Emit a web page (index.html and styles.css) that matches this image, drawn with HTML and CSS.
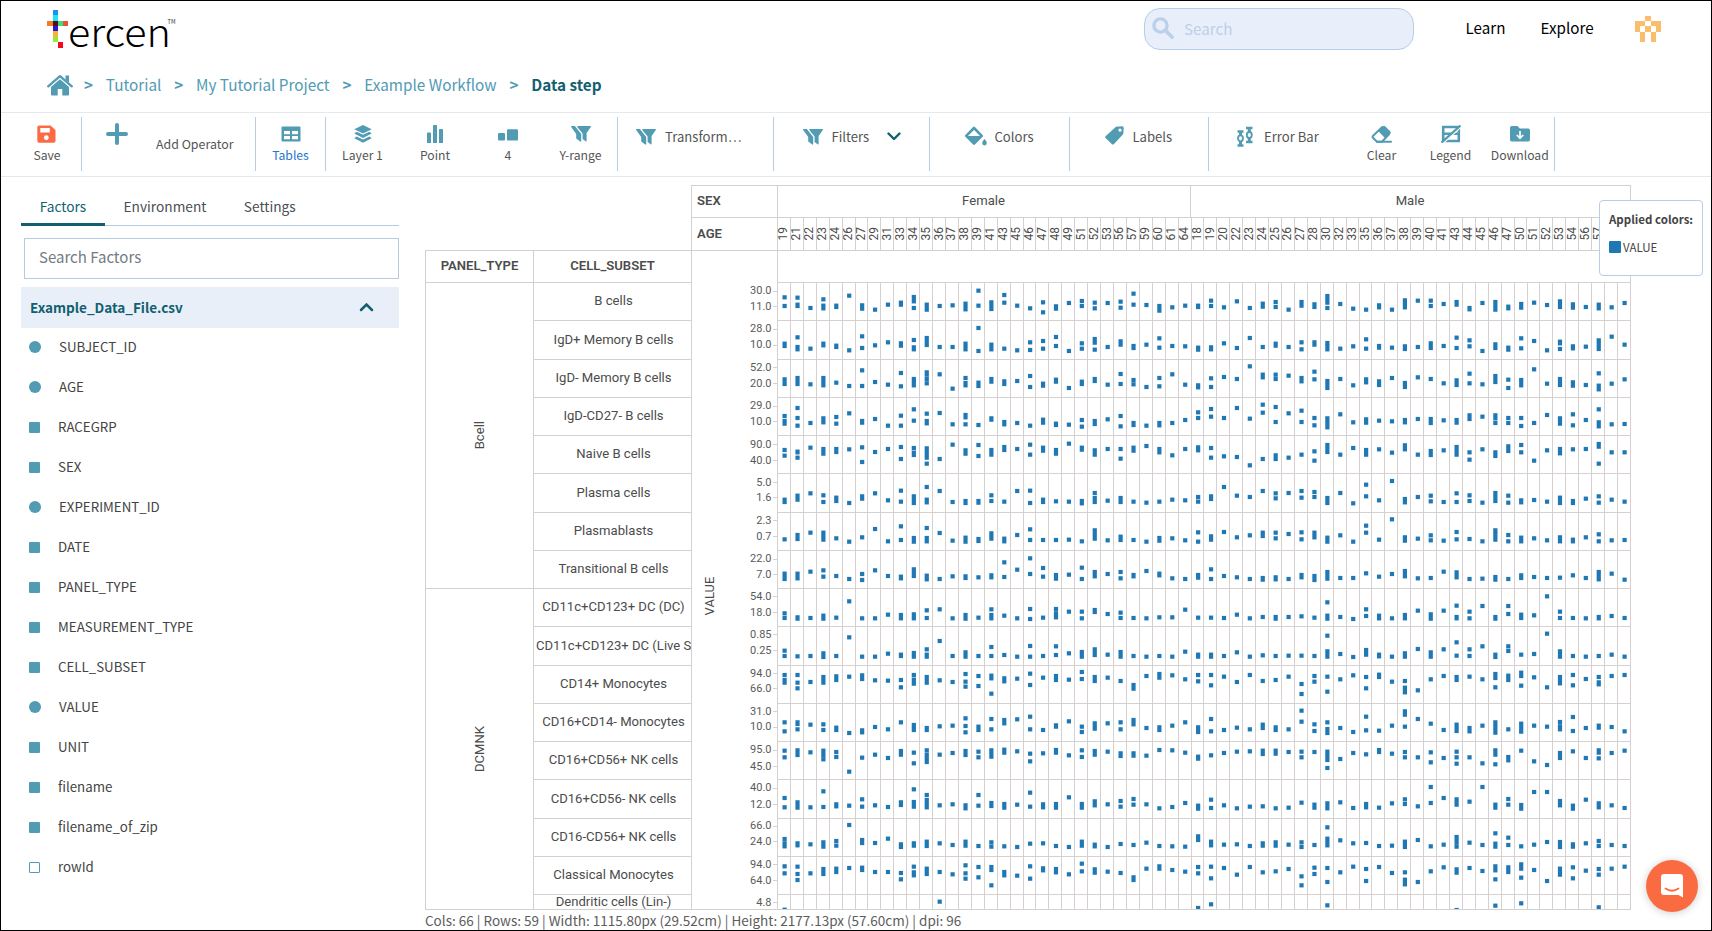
FILE: index.html
```html
<!DOCTYPE html>
<html lang="en">
<head>
<meta charset="utf-8">
<title>Tercen - Data step</title>
<link rel="stylesheet" href="styles.css">
</head>
<body>
<div class="app">
  <header class="topbar">
    <svg class="logo" width="132" height="44" viewBox="0 0 132 44">
      <g shape-rendering="crispEdges">
        <rect x="6" y="1" width="5" height="5.5" fill="#1296ef"/><rect x="6" y="6" width="5" height="6" fill="#1de4f6"/>
        <rect x="0" y="12" width="6" height="5" fill="#f37b2c"/><rect x="6" y="12" width="5" height="5" fill="#54101a"/><rect x="11" y="12" width="5" height="5" fill="#3ddc84"/><rect x="16" y="12" width="5" height="5" fill="#f0522f"/>
        <rect x="6" y="17" width="5" height="5.5" fill="#2a17d6"/><rect x="6" y="22" width="5" height="6" fill="#f9b233"/><rect x="6" y="28" width="5" height="5" fill="#86f03a"/><rect x="11" y="33" width="5" height="6" fill="#f4071f"/>
      </g>
      <text class="logo-word" x="21" y="37.500" textLength="103" lengthAdjust="spacingAndGlyphs">ercen</text>
      <text class="logo-tm" x="120.500" y="14.500" textLength="8" lengthAdjust="spacingAndGlyphs">TM</text>
    </svg>
    <div class="search">
      <svg width="22" height="22" viewBox="0 0 22 22"><circle cx="8.500" cy="8.500" r="6.600" fill="none" stroke="#bcd0e9" stroke-width="3.400"/><path d="M13.500 13.500L20 20" stroke="#bcd0e9" stroke-width="3.800" stroke-linecap="round"/></svg>
      <span>Search</span>
    </div>
    <a class="nav nav-learn">Learn</a>
    <a class="nav nav-explore">Explore</a>
    <svg class="avatar" width="26" height="26" viewBox="0 0 5 5" shape-rendering="crispEdges" fill="#fbbd6c"><path d="M2 0h1v1h-1zM0 1h2v1h-2zM3 1h2v1h-2zM0 2h1v1h-1zM2 2h1v1h-1zM4 2h1v1h-1zM1 3h1v2h-1zM3 3h1v2h-1z"/></svg>
  </header>

  <nav class="crumbs">
    <svg class="home" width="26" height="22" viewBox="0 0 26 22" fill="#519bb3"><path d="M13 5.200L4 12.900V20.500a1 1 0 0 0 1 1h5.700v-6.500h4.600v6.500H21a1 1 0 0 0 1-1V12.900z"/><path d="M1.200 12.300L13 2.200l11.800 10.100" fill="none" stroke="#519bb3" stroke-width="2.300" stroke-linecap="round" stroke-linejoin="round"/><path d="M18.500 1.500h3.500v7l-3.500-3z"/></svg>
    <b class="sep s1">&gt;</b><a>Tutorial</a><b class="sep">&gt;</b><a>My Tutorial Project</a><b class="sep">&gt;</b><a>Example Workflow</a><b class="sep">&gt;</b><strong>Data step</strong>
  </nav>

  <div class="toolbar">
    <div class="tool line save"><svg width="19" height="18" viewBox="0 0 19 18"><path d="M2 .5h11.500L18.500 5v11a1.800 1.800 0 0 1-1.800 1.800H2A1.800 1.800 0 0 1 .300 16V2.300A1.800 1.800 0 0 1 2 .500z" fill="#fb6b45"/><path d="M3.300 3h9.500v4.500H3.300z" fill="#fff"/><circle cx="9.300" cy="12.700" r="2.400" fill="#fff"/></svg><span>Save</span></div>
    <div class="tool-wide line add"><svg width="22" height="22" viewBox="0 0 22 22"><path d="M11 2v18M2 11h18" stroke="#519bb3" stroke-width="4" stroke-linecap="round"/></svg><span>Add Operator</span></div>
    <div class="tool line active"><svg width="20" height="18" viewBox="0 0 20 18"><path fill="#519bb3" fill-rule="evenodd" d="M1.500 1.500h17a1 1 0 0 1 1 1v13a1 1 0 0 1-1 1h-17a1 1 0 0 1-1-1v-13a1 1 0 0 1 1-1zM3 6v3.200h6V6zM11 6v3.200h6V6zM3 11v3.200h6V11zM11 11v3.200h6V11z"/></svg><span>Tables</span></div>
    <div class="tool nudge"><svg width="18" height="18" viewBox="0 0 18 18" fill="#519bb3"><path d="M9 0l8.700 4.200L9 8.400.300 4.200z"/><path d="M2.600 6.700L9 9.800l6.400-3.100 2.300 1.900L9 12.900.300 8.600z"/><path d="M2.600 11.400L9 14.500l6.400-3.100 2.300 1.900L9 17.700.300 13.300z"/></svg><span>Layer 1</span></div>
    <div class="tool nudge"><svg width="16" height="18" viewBox="0 0 16 18" fill="#519bb3"><rect x="0" y="7.500" width="4" height="10.500" rx=".6"/><rect x="6" y="0" width="4" height="18" rx=".6"/><rect x="12" y="4" width="4" height="14" rx=".6"/></svg><span>Point</span></div>
    <div class="tool nudge"><svg width="20" height="18" viewBox="0 0 20 18" fill="#519bb3"><rect x="0" y="8" width="7" height="7.500" rx="1"/><rect x="9" y="4.300" width="11" height="11.300" rx="1.200"/></svg><span>4</span></div>
    <div class="tool line"><svg width="20" height="18" viewBox="0 0 20 18"><use href="#funnels"/></svg><span>Y-range</span></div>
    <div class="tool-wide line transform"><svg width="20" height="18" viewBox="0 0 20 18"><use href="#funnels"/></svg><span>Transform…</span></div>
    <div class="tool-wide line filters"><svg width="20" height="18" viewBox="0 0 20 18"><use href="#funnels"/></svg><span>Filters</span><svg class="chev" width="14" height="9" viewBox="0 0 14 9"><path d="M1.500 1.500L7 7l5.500-5.500" fill="none" stroke="#125f70" stroke-width="2.400" stroke-linecap="round" stroke-linejoin="round"/></svg></div>
    <div class="tool-wide line colors"><svg width="22" height="20" viewBox="0 0 22 20"><path d="M9 2L16.700 9.800 9 17.600 1.300 9.800z" fill="none" stroke="#519bb3" stroke-width="2.600" stroke-linejoin="round"/><path d="M1.500 10h15.300l-7.800 8z" fill="#519bb3"/><path d="M19.500 13c1.600 2 2.300 2.900 2.300 4.100a2.300 2.300 0 0 1-4.600 0c0-1.200.7-2.100 2.300-4.100z" fill="#519bb3"/></svg><span>Colors</span></div>
    <div class="tool-wide line labels"><svg width="19" height="19" viewBox="0 0 19 19"><path fill="#519bb3" fill-rule="evenodd" d="M11 .700L17.200.300a1.500 1.500 0 0 1 1.500 1.500L18.300 8 9 18a1.500 1.500 0 0 1-2.200 0L.800 12.300a1.500 1.500 0 0 1 0-2.200zM15 2.600a1.600 1.600 0 1 0 .01 0z"/></svg><span>Labels</span></div>
    <div class="tool-wide errbar"><svg width="16" height="22" viewBox="0 0 16 22" fill="none" stroke="#519bb3"><path stroke-width="2.600" d="M.5 5.500h6M.5 19.500h6M9 2h6.500M9 16h6.500"/><path stroke-width="3" d="M3.500 5.500v4M3.500 15v4.500M12.300 2v4M12.300 12v4"/><ellipse cx="3.500" cy="12.300" rx="2.500" ry="3" stroke-width="1.800"/><ellipse cx="12.300" cy="9" rx="2.500" ry="3" stroke-width="1.800"/></svg><span>Error Bar</span></div>
    <div class="tool"><svg width="21" height="18" viewBox="0 0 21 18"><path d="M7.200 6L12 1.200a1.500 1.500 0 0 1 2.100 0l5.300 5.300a1.500 1.500 0 0 1 0 2.100l-5 5z" fill="#519bb3"/><path d="M11.800 1.500L1.900 11a1.200 1.200 0 0 0 0 1.700L6 16.800h5l7.500-8" fill="none" stroke="#519bb3" stroke-width="2"/><path d="M6 16.800h14" stroke="#519bb3" stroke-width="2" stroke-linecap="round"/></svg><span>Clear</span></div>
    <div class="tool"><svg width="20" height="18" viewBox="0 0 20 18"><path d="M2.200 2h15.600v14H2.200zM2 8.800h16" fill="none" stroke="#519bb3" stroke-width="2.600"/><path d="M1.800 18.500L20 2" stroke="#fff" stroke-width="1.500"/><path d="M.500 17.600L19.500.500" stroke="#519bb3" stroke-width="2.200"/></svg><span>Legend</span></div>
    <div class="tool line"><svg width="20" height="18" viewBox="0 0 20 18"><path d="M1.800 1h5.700l2.300 2.400h8.400A1.800 1.800 0 0 1 20 5.200v9.500a1.800 1.800 0 0 1-1.800 1.800H1.800A1.800 1.800 0 0 1 0 14.700V2.800A1.800 1.800 0 0 1 1.800 1z" fill="#519bb3"/><path d="M10 6v7M6.800 10L10 13.200 13.200 10" fill="none" stroke="#fff" stroke-width="1.700"/></svg><span>Download</span></div>
  </div>

  <main class="workspace">
    <aside class="sidebar">
      <div class="tabs"><span class="tab on">Factors</span><span class="tab">Environment</span><span class="tab">Settings</span></div>
      <div class="factor-search">Search Factors</div>
      <div class="file"><span>Example_Data_File.csv</span><svg width="15" height="10" viewBox="0 0 15 10"><path d="M2 8l5.500-5.500L13 8" fill="none" stroke="#125f70" stroke-width="2.500" stroke-linecap="round"/></svg></div>
      <ul class="factors">
        <li class="num">SUBJECT_ID</li><li class="num">AGE</li><li>RACEGRP</li><li>SEX</li><li class="num">EXPERIMENT_ID</li><li>DATE</li><li>PANEL_TYPE</li><li>MEASUREMENT_TYPE</li><li>CELL_SUBSET</li><li class="num">VALUE</li><li>UNIT</li><li>filename</li><li>filename_of_zip</li><li class="empty">rowId</li>
      </ul>
    </aside>

    <section class="chart">
      <div class="crosstab">
        <div class="cell name sex">SEX</div><div class="cell top">Female</div><div class="cell top end">Male</div>
        <div class="cell name age">AGE</div><div class="ages" id="ages"></div>
        <div class="cell head">PANEL_TYPE</div><div class="cell head">CELL_SUBSET</div><div class="cell"></div><div class="cell end wide"></div>
        <div class="body">
          <div class="panels"><div class="cell panel bcell"><span>Bcell</span></div><div class="cell panel dcm"><span>DCMNK</span></div></div>
          <div class="subsets" id="subsets"></div>
          <svg class="plot" id="plot" width="940" height="628" viewBox="0 0 940 628"></svg>
        </div>
      </div>
      <div class="status">Cols: 66 | Rows: 59 | Width: 1115.80px (29.52cm) | Height: 2177.13px (57.60cm) | dpi: 96</div>
    </section>
  </main>

  <div class="legend"><b>Applied colors:</b><div><i></i>VALUE</div></div>
  <button class="chat" aria-label="Chat"><svg width="24" height="26" viewBox="0 0 24 26"><path d="M4 1h16a3 3 0 0 1 3 3v20.500L18.500 22H4a3 3 0 0 1-3-3V4a3 3 0 0 1 3-3z" fill="#fff"/><path d="M5.500 15.500q6.500 4.500 13 0" fill="none" stroke="#fb6b42" stroke-width="1.800" stroke-linecap="round"/></svg></button>
</div>
<svg width="0" height="0" class="defs"><defs><g id="funnels" fill="#519bb3"><path d="M6.800 1H19.300a.6.6 0 0 1 .5 1L15.600 8V15.800a.6.6 0 0 1-1 .5L11.600 14V8.500L6.300 1.900a.6.6 0 0 1 .5-.9z"/><path d="M.700 1H3.900L5.200 2.700 10.200 9v7a.6.6 0 0 1-1 .5L5.200 13.500V9L.200 2A.6.600 0 0 1 .700 1z"/></g></defs></svg>
<script src="chart.js"></script>
</body>
</html>
```
FILE: styles.css
```css
* { box-sizing: border-box; }
body { margin: 0; background: #fff; font-family: "Noto Sans CJK SC", "Noto Sans", sans-serif; color: #4a4f54; }
.app { width: 1712px; height: 931px; border: 1px solid #000; position: relative; overflow: hidden; display: flex; flex-direction: column; }
.defs { position: absolute; }

.topbar { height: 56px; display: flex; align-items: flex-start; padding: 7px 50px 0 46px; flex: none; }
.logo { margin-top: 1px; overflow: visible; }
.logo-word { font-size: 39px; font-weight: 300; fill: #000; }
.logo-tm { font-size: 6px; fill: #333; }
.search { margin-left: 965px; width: 270px; height: 42px; border: 1px solid #b7cee8; border-radius: 16px; background: #e8effa; display: flex; align-items: center; padding: 0 0 2px 7px; gap: 10px; font-size: 15.200px; line-height: 20px; color: #bccfe9; }
.nav { font-size: 15.200px; line-height: 20px; color: #000; margin-top: 9px; }
.nav-learn { margin-left: 51.500px; width: 75px; }
.nav-explore { width: 94.500px; }
.avatar { margin-top: 8px; }

.crumbs { height: 55px; flex: none; padding: 0 46px; display: flex; align-items: center; font-size: 15.300px; line-height: 20px; color: #519bb3; }
.crumbs > :not(.home) { margin-bottom: 1px; }
.home { margin-right: 11px; }
.sep { margin-left: 12.800px; margin-right: 12.800px; }
.sep.s1 { margin-left: 0; }
.crumbs strong { color: #125f70; }

.toolbar { height: 65px; flex: none; border-top: 1px solid #e5e8ec; border-bottom: 1px solid #e5e8ec; padding: 0 0 1px 12px; display: grid; grid-template-columns: 69px 174px 70px 72px 73px 73px 74px 155.500px 156px 140px 139.500px 138.500px 69px 69px 69.500px; align-items: center; font-size: 12.200px; line-height: 16px; color: #555; }
.tool, .tool-wide { height: 54px; border-right: 1px solid transparent; }
.line { border-right-color: #b9cce0; }
.tool { display: flex; flex-direction: column; align-items: center; padding-top: 8px; gap: 4px; }
.tool.nudge { padding-left: 2px; }
.tool.save > svg { margin-left: -2px; }
.active span { color: #2577cf; }
.tool-wide { display: flex; gap: 9px; font-size: 13.100px; }
.tool-wide > svg { margin-top: 9px; }
.tool-wide > span { margin-top: 12px; white-space: nowrap; }
.add { padding-left: 24px; gap: 28px; font-size: 12.400px; }
.add > svg { margin-top: 6px; }
.add > span { margin-top: 19px; }
.transform { padding-left: 18px; }
.transform > svg, .filters > svg { margin-top: 11px; }
.filters { padding-left: 29px; }
.filters .chev { margin: 15px 0 0 9px; }
.colors { padding-left: 35px; gap: 8px; }
.labels { padding-left: 35px; }
.errbar { padding-left: 28px; gap: 11px; }

.workspace { display: flex; flex: 1; min-height: 0; }
.sidebar { width: 398px; padding: 9px 0 0 20px; flex: none; }
.tabs { display: flex; height: 40px; border-bottom: 1px solid #b5cbe2; font-size: 13.700px; line-height: 20px; }
.tab { padding: 10px 18.700px 0; height: 40px; }
.tab.on { color: #125f70; border-bottom: 3px solid #125f70; }
.factor-search { margin: 12px 0 0 3px; height: 41px; border: 1px solid #b5cbe2; padding: 8px 14px; font-size: 15px; line-height: 20px; color: #737b84; }
.file { margin-top: 8px; height: 41px; background: #e8eff9; display: flex; justify-content: space-between; align-items: center; padding: 0 25px 2px 9px; font-size: 13.500px; font-weight: 700; line-height: 20px; color: #125f70; }
.factors { list-style: none; margin: -1px 0 0; padding: 0 0 0 8px; }
.factors li { height: 40px; display: flex; align-items: center; gap: 18px; font-size: 13.300px; line-height: 18px; color: #444; }
.factors li::before { content: ""; box-sizing: border-box; width: 11px; height: 11px; background: #519bb3; border-radius: 1px; }
.factors li.num::before { width: 12px; height: 12px; border-radius: 50%; }
.factors li.empty::before { background: #fff; border: 1px solid #519bb3; }

.chart { margin-left: 26px; padding-top: 8px; font-family: Roboto, "Liberation Sans", sans-serif; font-size: 13.100px; line-height: 16px; color: #4c4c4c; }
.crosstab { display: grid; grid-template-columns: 108px 158px 86px 413px 441px; grid-template-rows: 32px 33px 32px 628px; }
.cell { border: solid #d3d0d0; border-width: 1px 0 0 1px; display: flex; align-items: center; justify-content: center; padding-bottom: 2px; }
.end { border-right-width: 1px; }
.name { grid-column: 3; justify-content: flex-start; padding-left: 5px; font-weight: 600; }
.cell.age { padding-bottom: 1px; }
.top { padding-right: 1px; }
.head { font-weight: 600; }
.wide, .ages { grid-column: 4 / 6; }
.ages { display: flex; border-top: 1px solid #d3d0d0; border-right: 1px solid #d3d0d0; }
.ages span { flex: 1 1 0; min-width: 0; border-left: 1px solid #d3d0d0; writing-mode: vertical-rl; display: flex; align-items: center; justify-content: center; font-size: 12px; line-height: 11px; }
.ages em { font-style: normal; transform: rotate(180deg); }
.body { grid-column: 1 / 6; display: flex; overflow: hidden; border-bottom: 1px solid #d3d0d0; }
.panels { width: 108px; flex: none; }
.panel { padding-bottom: 0; }
.panel span { writing-mode: vertical-rl; transform: rotate(180deg); }
.bcell { height: 306px; }
.dcm { height: 322px; }
.subsets { width: 158px; flex: none; }
.subset { height: 38.250px; overflow: hidden; white-space: nowrap; padding: 0 0 .5px 2px; }
.subset.long { justify-content: flex-start; padding-left: 2px; }
.subset.last { height: 16px; padding-bottom: 2px; }
.plot { flex: none; }
.plot .tick { font-size: 11px; fill: #5a5a5a; text-anchor: end; }
.plot .title { font-size: 13px; fill: #4c4c4c; text-anchor: middle; }
.plot .grid { stroke: #d6d0d0; stroke-width: 1; fill: none; }
.plot .marks { fill: #1f77b4; }
.status { font-family: "Noto Sans CJK SC", sans-serif; font-size: 13.530px; line-height: 18px; padding-top: 1px; color: #5c5c5c; white-space: nowrap; }

.legend { position: absolute; left: 1598px; top: 199px; width: 104px; height: 76px; background: #fff; border: 1px solid #b7cee8; border-radius: 4px; padding: 10px 0 0 9px; font-size: 11.500px; line-height: 16px; color: #444; white-space: nowrap; }
.legend div { display: flex; align-items: center; gap: 2px; margin-top: 12px; }
.legend i { width: 12px; height: 12px; background: #1f77b4; border-radius: 1px; }
.chat { position: absolute; left: 1645px; top: 859px; width: 52px; height: 52px; border: 0; border-radius: 50%; background: #fb6b42; box-shadow: 0 1px 8px rgba(0,0,0,.2); display: flex; align-items: center; justify-content: center; padding: 0; }
```
FILE: chart.js
```js
const ages = "19 21 22 23 24 26 27 29 31 33 34 35 36 37 38 39 41 43 45 46 47 48 49 51 52 53 56 57 59 60 61 64 18 19 20 22 23 24 25 26 27 28 30 32 33 35 36 37 38 39 40 41 43 44 45 46 47 50 51 52 53 54 56 57 59 60".split(" ");

const subsets = ["B cells", "IgD+ Memory B cells", "IgD- Memory B cells", "IgD-CD27- B cells", "Naive B cells", "Plasma cells", "Plasmablasts", "Transitional B cells", "CD11c+CD123+ DC (DC)", "CD11c+CD123+ DC (Live Sorted)", "CD14+ Monocytes", "CD16+CD14- Monocytes", "CD16+CD56+ NK cells", "CD16+CD56- NK cells", "CD16-CD56+ NK cells", "Classical Monocytes", "Dendritic cells (Lin-)"];

// [label, y] pairs for each facet's axis
const ticks = [
  ["30.0", 291, "11.0", 306.3], ["28.0", 329, "10.0", 345], ["52.0", 367.7, "20.0", 383.3], ["29.0", 406, "10.0", 421.7],
  ["90.0", 444.3, "40.0", 460.7], ["5.0", 482.3, "1.6", 497.7], ["2.3", 520.3, "0.7", 536.3], ["22.0", 559, "7.0", 574.3],
  ["54.0", 596.7, "18.0", 612.3], ["0.85", 634.7, "0.25", 650.7], ["94.0", 673.3, "66.0", 688.7], ["31.0", 711.3, "10.0", 727],
  ["95.0", 750, "45.0", 766.3], ["40.0", 788, "12.0", 804.7], ["66.0", 826, "24.0", 841.3], ["94.0", 864.7, "64.0", 880.3], ["4.8", 902.3]
];

// One line per facet row, one entry per age column: "a,b" separate points, "a-b" a run of overlapping points (thirds of a pixel)
const upper = [
"262,288 263,284-288 294 268,287-295 287-291 257 286-296 299 284 278-284 261-274,294 284-299 288 286 281-298 242,287 277-297 255,278 287 295 277,307 289-296 279 273,288 278,295 279 275,293 251,284 285 288-302 292 287 287-291 272,288 292 274 294 281-290 276,291 299 276-287 283-291 258-278,294 282 296 299 286-292 299 271-292 272 272,288 282 276-284 294-298 279 276-299 290-295 282-293 278 285 274-291 283-293 291 284-295 292 279",
"401-408 382,411-418 416 401-406 407-411 421 379,414 406 397 400-407 390,412-418 384-405 411 411 401-418 354,423 404-418 416 421 397,420 393,416 381,408 423 400,416 387-398,419 411 394-404 408-414 404 385,413 408 409 413-419 412-418 400 414 384 411 401-407 411 397,418 397-404 399,410-418 416 409 388,416 408-413 413 409-417 411 400-414 408 383,414 391,409 423 403-414 413-419 385,415 393 421 395-400,417 409-415 410 391,402-417 380 404",
"508-522 504-522 523 504-526 518 528 481,528 516 524 489,529 507,519-526 487-494,507,520 493 536 504,519-526 518-528 507-515 514-522 513 498,531 521-527 509-515 534 515-522 507-513 524 492,522 510,523 531 504,529 493 524 526-532 505,531 501 507 469 494-502 494,507 497 504-514 485,508 513-534 507 526 508-517 514-525 504 519-531 502 507 520 511-525 491,520 523 498-516 509,534 510-526 478 521 507-525 517-527 525 490,527-538 521 508",
"618,633-641 594,624,647 639 625-637 621,641 610 633-638 627 647 617,647 598,632 611,633-640 609 643 615-622,643 645 625-629 636-643 639 647 629-638 641-645 644 630,650 633-642 628 618,649 639-645 647 639-646 639 630 607,624 597,620 624 594 626 584,608 591,636 610 602,636 624,646 625-641,652 613 637 628-638 632 634 630-637 627 627-639 631 630-638 616-627 620 616-625,639 624,639 624,648 639 615 625-641 613,646 630 598,637-649 643 642",
"720,737 725-727,743 713 717-731 717-726 718 712,756 726 717 711,747 714,728-735 715-743,761 747 704 721-731 705,738 720-734 711-720 717 704,734 713-722 720-731 701 713-719 721-734 717 717,746 713-722 708 717-727 736 717 712-721 714,743 739 741 766 747 736-747 743 734 724,752 705-726 734 714 720-734 718 728 706-718 734 723-735 721 711-734 727,749 718 727-738 709-723 705,727 752 721 717-730 718 717 702-710,761 727 727",
"869-876 857-869 850 856,876 863-873 879 859-866 850 871 842,875 859-879 831,869-877 843 876 873-879 873-878 856,873 875 843 842,879 869-876 874 875 873-880 849,864-876 872 864-876 875 878 875 869 871 861,875 859-867 831 857 861 843 850,865 849 843,863 846,861 864-879 849 880 824,859 871 813 867-877 861 857,874 876 850,876 856,873 878 849-873 857,878 871-877 870 875 863-879 873-879 866 859,878 869 875",
"988 975-987 968 968-989 985 995 982 957 994 949,990 984-995 954,984-994 969 992 983-995 987-993 970-986 986-994 975 958,990 990 990 989 994 961-986 991 980-990 990 995 984-992 985 991 967,995 979-989 966 982 976 968-978 968,985 972 967,988 968-982 983-995 976 995 947,968 989 928 982-992 986 976,991 992 966,988 987 994 961,972-989 975,994 983-994 985 991 982-994 989-994 982 973,994 991 990",
"1091-1107 1091-1105 1085 1081,1100 1098 1107 1092,1110 1081 1098 1100-1105 1078-1098 1097-1108 1107 1099 1099-1104 1102 1096-1102 1057,1101 1079 1045,1092 1074,1100 1095-1106 1094 1073,1107 1086-1099 1092 1086,1105 1095-1099 1083 1091-1096 1105 1107 1095-1103 1078,1107 1098 1102 1107 1104-1109 1102-1108 1107 1095-1102 1098-1110 1086-1106 1104 1104 1090 1100 1092 1083-1099 1105 1104 1085 1087-1102 1107 1106 1101-1109 1107 1096-1104 1101 1104 1103 1096 1104 1086,1098-1108 1091 1109"
];
const lower = [
"130,144 142-146 144 137-146 143 94 145 145 134 135-145 133-145 121,144 118 145 135-146 143 118,135-145 137 145 117,147 143 117,130-142 125 125,145 120-126 132 128,144 144 145 142 142 119 143 143 144 134 145 141 141-146 141 139 143 97,137-146 141 147 118,138 137-145 145 135-145 122 133-146 122 107,141-145 125,145 108 141-146 108,132 134-144 136 79 125,144 144 145 141-145 138 144",
"242,258 259 258 250-261 258 202 260 260 251 254-258 249-260 238,254-260 213 258 247-260 258 231,258 255 260 228,260 258 229,255 250 246-260 238-255 254 246-260 258 260 258 260 245 254-260 254-260 258 247 260 256 258 257 257 258 197,244-260 252 261 240-254 254-259 260 250-260 237 247-260 238 217,257 238,258 229 254-261 229,243 254 252 191 244-260 258 260 258 254 260",
"315,330-338 315,338,355 336 321-338 319-330 320 316-327 331 332 330,352 315,329-341 321-338 331 336 312,335,350 318,348 317-325,371 325-334 326 311,345 323 318-330 329 306,327 321-333 323 333 345-356 318 312-323 316 328 315,334 315,346 320 336 315 333 330 320 342,372 318,335 320,365 328 316 321,355 314-321 335 333,353-367 361 328 318 321-330 320 328 312-324,352 317-330 308-318,347 322 352 321-340 315,346 327 321,337-343 318 315",
"457,484 457-462,478 464 463,480 473-480 489 481-487 471 478 457 465-480 474-480 469 467 445,468,487 470-480 447,478 450-460 448 440,478 480 466-470 454 470,486 460-476 460 457,478 450-463 474 472-480 467 457 472-486 447,484 480 473 478 464-474 472-480 478 422,455 463,483 457,477-489 474 486 440,481 482 467 424-434,470 447 461 480 464-483 474-484 467 457-488 478 461-485 467 470 456,469-478 441,483 474 467-473 471 484",
"542,562 541-555 547 542-556,568 546,561 605 563 554 564 543-554 548,580 541,554-576 554 549 543-555 545,562 541-560 539-548 544 551,574 550 540-548 556 541,561 543-554 545 550-558 550-557 557 540 541 548 560-566 556 549 545 544 542-552 542-551 546 545,562 546 545-570,594 567 549 553 540-546 551 546,562 562 547,577 564 545,562,581 562 580 541-554,583 561-571 542 574 585 549-564 544 564 541-548,565 549 542",
"684,712 697-713 712 664,711 703-709 707 688,710 706 711 697-705 658,696-710 675,690-712 706 703 706-715 675,707 699-708 702-713 704 668,710 703-712 702-713 682 702-713 694-706 703 693,710 687,704 703 715 711 699 707-716 689,714 706 715 710 709 715 713 698 704-713 700-715 697 714 702-712 713 700 688,702 709 651,699 684 688-704 695 651 704-713 687,704 705-716 666 666 693-706 707-716 689 700-712 706 714",
"807,820-829 820-826 823 817-830 813,827 765 810-819 819 806 823-831 820-827 815-828 820 825 815-827 828 817,830 829 831 821 820 828 831 815-827 824-829 831 822 825 818 828 829 830 799-810 815-826 824 823 828 820-827 817-827 824 817,831 825 772,806-826 811 820 819 828 827 815-831 810 829 824 801-818,830 818 825 790,821-830 803,825 829 824 816 816-831 823-830 820 813,828 825 828",
"889,910 890,912,930 910 897-912 896-906 894 893-900 906 906 909,928 890,907-916 896-912 906 913 886,910,926 891,922 891-900,946 906-916 917 889,926 895-901 897-907 913 881,904 898-908 905 909 922-930 896 889-896 900 905 891,910 890,925 894 914 891 907 904 897 919,946 893,912 894,936 907 890 897,933 891 909 907,929-943 936 904 892 898-908 894 903 889-901,928 892-906 883-896,923 900 933 896-914 892,925 902 897,914 896 890",
"1019 x x x x x x x x x x x 995 x x x x x x x x x x x x x x x x x x x 1014 1003 x x x x x x x x 1006 x x x x x x x x x 1020 x x 1007 x 1000 x x x x x 1012 x x"
];

const left = 691, top0 = 282, pitch = 12.923, rowH = 38.25, x0 = 86;

document.getElementById("ages").innerHTML = ages.map(a => `<span><em>${a}</em></span>`).join("");
document.getElementById("subsets").innerHTML = subsets.map((s, i) =>
  `<div class="cell subset${i === 9 ? " long" : ""}${i === 16 ? " last" : ""}">${s}</div>`).join("");

let grid = "M.5 0V628";
for (let c = 0; c <= 66; c++) grid += `M${Math.round(x0 + c * pitch) + .5} 0V628`;
for (let r = 0; r <= 16; r++) grid += `M${x0} ${Math.round(r * rowH) + .5}H939`;

let labels = "";
ticks.forEach(t => {
  for (let i = 0; i < t.length; i += 2) {
    const y = t[i + 1] - top0;
    labels += `<text class="tick" x="80.5" y="${y + 3.2}">${t[i]}</text>`;
    grid += `M82 ${Math.round(y - .5) + .5}H86`;
  }
});

let marks = "";
const add = (rows, base) => rows.forEach(row => row.split(" ").forEach((entry, c) => {
  if (entry === "x") return;
  entry.split(",").forEach(run => {
    const [a, b = a] = run.split("-").map(Number);
    const x = 784.6 - left + c * pitch - 2.1;
    const y = base - top0 + a / 3 - 2.1;
    marks += `<rect x="${x.toFixed(2)}" y="${y.toFixed(2)}" width="4.2" height="${((b - a) / 3 + 4.2).toFixed(2)}"/>`;
  });
}));
add(upper, 210);
add(lower, 570);

document.getElementById("plot").innerHTML =
  `<path class="grid" d="${grid}"/>${labels}<text class="title" transform="translate(23 314) rotate(-90)">VALUE</text><g class="marks">${marks}</g>`;
```
